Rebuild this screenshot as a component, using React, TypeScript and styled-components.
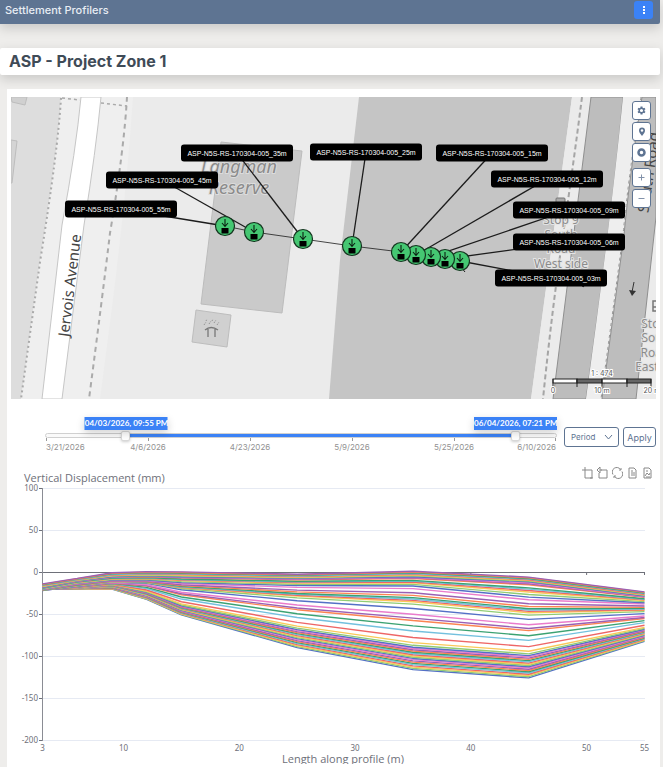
import React, { useState } from 'react';
import styled, { createGlobalStyle } from 'styled-components';

const GlobalStyle = createGlobalStyle`
  *, *::before, *::after { box-sizing: border-box; }
  html, body { margin: 0; padding: 0; }
  body {
    background: #eeedeb;
    font-family: Inter, 'Open Sans', sans-serif;
    color: #5e7492;
  }
  button, select, input { font: inherit; color: inherit; margin: 0; }
  svg { display: block; }
`;

const Page = styled.div`
  display: flex;
  flex-direction: column;
  min-height: 100vh;
  padding-right: 3px;
`;

const TopBar = styled.header`
  display: flex;
  align-items: center;
  justify-content: space-between;
  height: 24px;
  padding: 0 7px 4px 5px;
  background: #5e7492;
  color: #e8edf4;
  font-size: 11px;
  font-weight: 500;
  line-height: 18px;
  border-radius: 0 0 2px 0;
  box-shadow: 0 4px 12px rgba(0, 0, 0, 0.16);
`;

const MenuButton = styled.button`
  display: grid;
  place-items: center;
  width: 19px;
  height: 18px;
  padding: 0;
  border: 0;
  border-radius: 3px;
  background: #3b82f6;
`;

const TitleCard = styled.section`
  margin-top: 24px;
  padding: 0 9px;
  background: #fff;
  border-radius: 2px;
  box-shadow: 0 4px 12px rgba(0, 0, 0, 0.16);
`;

const Title = styled.h1`
  margin: 0;
  color: #3f4b57;
  font-size: 16px;
  font-weight: 700;
  line-height: 27px;
`;

const Card = styled.main`
  flex: 1;
  margin: 14px 0 0 7px;
  padding-top: 8px;
  background: #fff;
`;

const MapFrame = styled.section`
  position: relative;
  margin: 0 4px;
  overflow: hidden;
  background: #ebebeb;
`;

const Drawing = styled.svg`
  width: 100%;
  height: auto;
`;

const Tag = styled.span<{ $x: number; $y: number }>`
  position: absolute;
  left: ${(p) => p.$x}%;
  top: ${(p) => p.$y}%;
  width: 112px;
  border-radius: 3px;
  background: #000;
  color: #fff;
  font-family: 'Liberation Sans', Arial, sans-serif;
  font-size: 7px;
  line-height: 17px;
  text-align: center;
  white-space: nowrap;
  transform: translate(-50%, -50%);
`;

const MapControls = styled.div`
  position: absolute;
  top: 4px;
  right: 5px;
  display: flex;
  flex-direction: column;
  gap: 2px;
`;

const ZoomGroup = styled.div`
  display: flex;
  flex-direction: column;
  gap: 2px;
  margin-top: 4px;
`;

const MapButton = styled.button`
  display: grid;
  place-items: center;
  width: 19px;
  height: 19px;
  padding: 0;
  border: 1px solid #5e7492;
  border-radius: 3px;
  background: #fff;
`;

const RangeRow = styled.section`
  display: flex;
  align-items: flex-start;
  gap: 4px;
  padding: 28px 4px 0 38px;
  font-size: 9px;
`;

const Timeline = styled.div`
  position: relative;
  flex: 1;
  margin-right: 3px;
  padding-top: 6px;
`;

const Rail = styled.div<{ $from: number; $to: number }>`
  height: 5px;
  border: 1px solid #d0d0d0;
  border-radius: 3px;
  background: linear-gradient(
    to right,
    #fafafa ${(p) => p.$from}%,
    #3b82f6 ${(p) => p.$from}%,
    #3b82f6 ${(p) => p.$to}%,
    #fafafa ${(p) => p.$to}%
  );
`;

const Handle = styled.input`
  position: absolute;
  top: 3px;
  left: 0;
  width: 100%;
  height: 11px;
  appearance: none;
  background: transparent;
  pointer-events: none;

  &::-webkit-slider-thumb {
    appearance: none;
    width: 9px;
    height: 10px;
    border: 1px solid #d9d9d9;
    border-radius: 2px;
    background: #fff;
    box-shadow: 0 1px 3px rgba(0, 0, 0, 0.2);
    pointer-events: auto;
  }
`;

const Bubble = styled.output<{ $at: number; $last?: boolean }>`
  position: absolute;
  bottom: 100%;
  left: ${(p) => (p.$last ? 'auto' : `calc(${p.$at}% + 4px)`)};
  right: ${(p) => (p.$last ? '0' : 'auto')};
  width: 83px;
  margin-bottom: -3px;
  background: #3b82f6;
  color: #fff;
  font-family: Lato, sans-serif;
  font-size: 8px;
  font-weight: 700;
  line-height: 13px;
  text-align: center;
  white-space: nowrap;
  box-shadow: 0 3px 8px rgba(0, 0, 0, 0.18);
  transform: ${(p) => (p.$last ? 'none' : 'translateX(-50%)')};
`;

const Scale = styled.div`
  display: flex;
  justify-content: space-between;
  padding: 0 1px;
  color: #929292;
  font-size: 8px;
  line-height: 12px;
`;

const Mark = styled.span`
  display: flex;
  flex-direction: column;
  align-items: center;
  width: 0;
  white-space: nowrap;

  &::before {
    content: '';
    width: 1px;
    height: 3px;
    flex: none;
    background: #999;
  }
  &:first-child { align-items: flex-start; }
  &:last-child { align-items: flex-end; }
`;

const SelectBox = styled.div`
  position: relative;

  svg {
    position: absolute;
    right: 6px;
    top: 7px;
    pointer-events: none;
  }
`;

const Select = styled.select`
  appearance: none;
  width: 55px;
  height: 20px;
  padding: 0 6px;
  border: 1px solid #5e7492;
  border-radius: 3px;
  background: #fff;
  font-size: 8px;
`;

const ApplyButton = styled.button`
  width: 33px;
  height: 20px;
  padding: 0;
  border: 1px solid #5e7492;
  border-radius: 3px;
  background: #fff;
  font-size: 9px;
`;

const ChartPanel = styled.section`
  margin-top: 13px;
  font-family: 'Noto Sans', sans-serif;
`;

const ChartHeader = styled.div`
  display: flex;
  align-items: flex-start;
  justify-content: space-between;
  height: 18px;
  padding: 0 7px 0 17px;
`;

const ChartTitle = styled.h2`
  margin: 0;
  align-self: flex-end;
  color: #6e7079;
  font-family: 'Open Sans', 'Noto Sans', sans-serif;
  font-size: 11px;
  font-weight: 400;
  line-height: 12px;
`;

const Toolbox = styled.div`
  display: flex;
  gap: 4px;
`;

const Tool = styled.button`
  display: grid;
  place-items: center;
  width: 11px;
  height: 14px;
  padding: 0;
  border: 0;
  background: none;
`;

type Point = { name: string; x: number; y: number; lx: number; ly: number };

const MAP = { x: 11, y: 97, w: 645, h: 302 };

const POINTS: Point[] = [
  { name: '03m', x: 460, y: 261, lx: 551, ly: 278 },
  { name: '06m', x: 445, y: 259, lx: 569, ly: 242 },
  { name: '09m', x: 431, y: 257, lx: 569, ly: 210 },
  { name: '12m', x: 416, y: 255, lx: 547, ly: 179 },
  { name: '15m', x: 401, y: 252, lx: 492, ly: 153 },
  { name: '25m', x: 352, y: 246, lx: 366, ly: 152 },
  { name: '35m', x: 303, y: 239, lx: 237, ly: 153 },
  { name: '45m', x: 254, y: 232, lx: 162, ly: 180 },
  { name: '55m', x: 225, y: 226, lx: 121, ly: 209 },
];

const MAP_FONT = "'Noto Sans', sans-serif";

function MapDrawing() {
  const halo = { stroke: '#e4e4e4', strokeWidth: 2, paintOrder: 'stroke' } as const;
  return (
    <Drawing viewBox={`${MAP.x} ${MAP.y} ${MAP.w} ${MAP.h}`} role="img" aria-label="Monitoring points map" fontFamily={MAP_FONT}>
      <rect x="11" y="97" width="645" height="302" fill="#ebebeb" />
      <path d="M11 97H61Q58 150 40 260L21 399H11Z" fill="#dddddd" />
      <path d="M61 97H133Q126 200 111 315L100 399H21L40 260Q58 150 61 97Z" fill="#efefef" />
      <path d="M11 97H27L25 105L12 102Z" fill="#d0d0d0" stroke="#bdbdbd" />
      <path d="M11 140L17 141L12 183H11Z" fill="#d4d4d4" stroke="#bdbdbd" />
      <path d="M81 97H101Q96 150 84 225L62 399H42L62 225Q76 150 81 97Z" fill="#fff" stroke="#c6c6c6" />
      <g fill="none" stroke="#aaa" strokeWidth="2">
        <path d="M61 98Q58 150 40 262L21 399" strokeDasharray="2 3" />
        <path d="M62 98L80 100M101 103L127 106" strokeDasharray="3 3" strokeWidth="1.5" />
        <path d="M127 97Q124 150 110 233Q102 300 89 399" strokeDasharray="5 4" />
      </g>

      <path d="M221 142L302 151L282 313L201 304Z" fill="#cacaca" stroke="#bcbcbc" />
      <path d="M196 310L231 315L227 347L192 342Z" fill="#d0d0d0" stroke="#bdbdbd" />
      <g fill="none" stroke="#777" strokeWidth="1.3">
        <path d="M205 330Q211 325 218 330M208 329V337M215 329V337" />
        <path d="M204 325l2-3M209 324l2-3M214 323l2-3M206 321l1-2M212 321l1-2M217 325l2-3" strokeWidth="0.8" strokeDasharray="1 1" />
      </g>

      <path d="M359 97H572L531 399H329L340 260Z" fill="#c5c5c5" />
      <path d="M572 97H591L553 399H531Z" fill="#ebebeb" />
      <path d="M591 97H623Q614 200 586 399H553Z" fill="#bdbdbd" stroke="#8f8f8f" />
      <path d="M623 97H642Q629 180 624 235L602 399H586Q612 210 623 97Z" fill="#eeeeee" />
      <path d="M642 97H656V217L636 399H602L624 235Q629 180 642 97Z" fill="#bdbdbd" stroke="#8f8f8f" />
      <path d="M582 97Q574 160 563 235Q552 310 543 399" fill="none" stroke="#a5a5a5" strokeWidth="2" strokeDasharray="5 3" />
      <path d="M641 97Q628 180 623 235L601 399" fill="none" stroke="#999" strokeDasharray="3 3" />
      <path d="M634 282L632 292" stroke="#333" />
      <path d="M629 290L636 291L632 296Z" fill="#333" />
      <path d="M584 282L583 287" stroke="#333" strokeWidth="2" />

      <g fontSize="18" fontStyle="italic" fill="#8b8b8b" textAnchor="middle" stroke="#dcdcdc" strokeWidth="2" paintOrder="stroke">
        <text x="239" y="173">Langman</text>
        <text x="239" y="194">Reserve</text>
      </g>
      <g fill="#444" fontSize="15" textAnchor="middle">
        <text transform="translate(75 286) rotate(-83)">Jervois Avenue</text>
        <text transform="translate(654 173) rotate(-82)">South Road</text>
      </g>
      <g fontSize="12" fill="#8c8c8c" textAnchor="middle" {...halo}>
        <text x="561" y="224">Stop 9</text>
        <text x="561" y="239">South</text>
        <text x="561" y="253">Road</text>
        <text x="561" y="268">West side</text>
        <text x="659" y="328">Stop 8</text>
        <text x="658" y="342">South</text>
        <text x="655" y="357">Road</text>
        <text x="660" y="371">East side</text>
      </g>
      <rect x="556" y="198" width="9" height="10" rx="1" fill="#aaa" stroke="#777" />
      <path d="M656 301H653V311H656M653 307H656" fill="none" stroke="#777" strokeWidth="1.5" />

      <g stroke="#222" strokeWidth="1">
        <rect x="553" y="379" width="24" height="4" fill="#fff" />
        <rect x="577" y="379" width="25" height="4" fill="#666" />
        <rect x="602" y="379" width="25" height="4" fill="#fff" />
        <rect x="627" y="379" width="24" height="4" fill="#666" />
        <path d="M553 379V389M577 379V387M602 379V389M627 379V387M651 379V389" />
      </g>
      <g fontFamily="Inter, sans-serif" fontSize="7" fill="#555" textAnchor="middle" stroke="#fff" strokeWidth="2" paintOrder="stroke">
        <text x="602" y="376">1 : 474</text>
        <text x="553" y="393">0</text>
        <text x="602" y="393">10 m</text>
        <text x="652" y="393">20 m</text>
      </g>

      <g stroke="#1c1c1c" fill="none">
        <path d={'M' + POINTS.map((p) => `${p.x} ${p.y}`).join('L')} strokeWidth="0.8" />
        {POINTS.map((p) => (
          <path key={p.name} d={`M${p.x} ${p.y}L${p.lx} ${p.ly}`} strokeWidth="1.3" />
        ))}
        <path d="M460 269Q463 268 465 272" />
      </g>
      {POINTS.map((p) => (
        <g key={p.name} transform={`translate(${p.x} ${p.y})`}>
          <circle r="9.5" fill="#45c772" stroke="#14351f" strokeWidth="1.2" />
          <path d="M0 -7V0M-3 -3L0 0.5L3 -3" fill="none" stroke="#0b1f12" strokeWidth="1.1" />
          <rect x="-3.5" y="2" width="7" height="5.5" fill="#000" />
        </g>
      ))}
    </Drawing>
  );
}

const PALETTE = ['#5470c6', '#91cc75', '#fac858', '#ee6666', '#73c0de', '#3ba272', '#fc8452', '#9a60b4', '#ea7ccc'];

// Surveys at which the displacement of every station is known; the rest are spread between them.
const KEY_SURVEYS = [0, 18, 27, 36, 45, 52];
const SPREADS = [
  null,
  [0, 0.05, 0.12, 0.25, 0.42, 0.55, 0.69, 0.75, 0.85, 1],
  [0, 0.19, 0.3, 0.36, 0.42, 0.48, 0.58, 0.7, 0.88, 1],
  [0, 0.17, 0.33, 0.43, 0.52, 0.6, 0.8, 0.87, 0.93, 1],
  null,
];
const STATIONS: { at: number; mm: number[] }[] = [
  { at: 3, mm: [-19.5, -19, -21.5, -20, -17.5, -13.5] },
  { at: 6, mm: [-19.5, -18, -16.5, -13, -10, -7] },
  { at: 9, mm: [-19.8, -14.5, -11.5, -9, -5, -0.3] },
  { at: 12, mm: [-32, -23.5, -13, -9, -4, 1] },
  { at: 15, mm: [-50.3, -39.6, -20.6, -12, -5, 0.8] },
  { at: 25, mm: [-89.5, -68, -33.6, -15.5, -7, -2] },
  { at: 35, mm: [-115.6, -89, -42.8, -16, -5, 1.5] },
  { at: 45, mm: [-125.5, -99, -55.8, -29.3, -11, -5.5] },
  { at: 55, mm: [-82, -67.5, -49, -36, -28, -23] },
];

const xOf = (metres: number) => 35.5 + ((metres - 3) * 602) / 52;
const yOf = (mm: number) => 88.5 - mm * 0.84;

function valueAt(mm: number[], survey: number) {
  let k = 0;
  while (k < KEY_SURVEYS.length - 2 && survey > KEY_SURVEYS[k + 1]) k += 1;
  const step = survey - KEY_SURVEYS[k];
  const spread = SPREADS[k];
  const f = spread ? spread[step] : step / (KEY_SURVEYS[k + 1] - KEY_SURVEYS[k]);
  return mm[k] + (mm[k + 1] - mm[k]) * f;
}

const PROFILES = Array.from({ length: 53 }, (_, i) => ({
  color: PALETTE[i % PALETTE.length],
  points: STATIONS.map((s) => `${xOf(s.at).toFixed(1)},${yOf(valueAt(s.mm, i)).toFixed(2)}`).join(' '),
}));

function ProfileChart() {
  return (
    <Drawing viewBox="0 0 653 280" role="img" aria-label="Vertical displacement along profile" fill="#6e7079" fontSize="8">
      {[100, 50, 0, -50, -100, -150, -200].map((v) => (
        <g key={v}>
          <path d={`M36 ${yOf(v)}H638`} stroke="#e6eaf3" />
          <path d={`M32 ${yOf(v)}H36`} stroke="#6e7079" />
          <text x="31" y={yOf(v) + 2} textAnchor="end">{v}</text>
        </g>
      ))}
      <path d="M35.5 4V257" stroke="#8a8c94" />
      <path d={`M36 ${yOf(0)}H638`} stroke="#6e7079" />
      {[10, 20, 30, 40, 50, 55].map((v) => (
        <path key={v} d={`M${xOf(v)} 88V91`} stroke="#6e7079" />
      ))}
      <g fill="none" strokeWidth="1.4" strokeLinejoin="bevel">
        {PROFILES.map((p, i) => (
          <polyline key={i} points={p.points} stroke={p.color} />
        ))}
      </g>
      {[3, 10, 20, 30, 40, 50, 55].map((v) => (
        <text key={v} x={xOf(v)} y="267" textAnchor="middle">{v}</text>
      ))}
      <text x="336" y="279" fontSize="11" fontFamily="'Open Sans', 'Noto Sans', sans-serif" textAnchor="middle">
        Length along profile (m)
      </text>
    </Drawing>
  );
}

const TOOLS: { label: string; d: string }[] = [
  { label: 'Zoom', d: 'M0 3H10V11H3V0M8 11H11' },
  { label: 'Zoom reset', d: 'M4 3H10V11H2V6M0 3L3 0V6ZM3 3H5' },
  { label: 'Restore', d: 'M1 7.500A4.500 4.500 0 0 1 8.500 2.500M10 4.500A4.500 4.500 0 0 1 2.500 9.500M9 1V3H7M2 11V9H4' },
  { label: 'Data view', d: 'M2 1H7L9 3V11H2ZM4 4H6M4 6H8M4 8H8' },
  { label: 'Save as image', d: 'M2 1H7L9 3V11H2ZM3 9L5 6L7 8L8 6M4 4H6M4 10H8' },
];

const DATES = ['3/21/2026', '4/6/2026', '4/23/2026', '5/9/2026', '5/25/2026', '6/10/2026'];

const START = { from: 151, to: 927 };

const formatMoment = (value: number) => {
  if (value === START.from) return '04/03/2026, 09:55 PM';
  if (value === START.to) return '06/04/2026, 07:21 PM';
  const t = new Date(2026, 2, 21);
  t.setMinutes(Math.round((value / 1000) * 81 * 1440));
  return t.toLocaleString('en-US', {
    month: '2-digit',
    day: '2-digit',
    year: 'numeric',
    hour: '2-digit',
    minute: '2-digit',
  });
};

export default function App() {
  const [from, setFrom] = useState(START.from);
  const [to, setTo] = useState(START.to);

  return (
    <>
      <GlobalStyle />
      <Page>
        <TopBar>
          <span>Settlement Profilers</span>
          <MenuButton aria-label="Menu">
            <svg width="4" height="10" viewBox="0 0 4 10" fill="#fff">
              <rect x="1" y="1" width="2" height="2" />
              <rect x="1" y="4" width="2" height="2" />
              <rect x="1" y="7" width="2" height="2" />
            </svg>
          </MenuButton>
        </TopBar>
        <TitleCard>
          <Title>ASP - Project Zone 1</Title>
        </TitleCard>
        <Card>
          <MapFrame>
            <MapDrawing />
            {POINTS.map((p) => (
              <Tag key={p.name} $x={((p.lx - MAP.x) / MAP.w) * 100} $y={((p.ly - MAP.y) / MAP.h) * 100}>
                ASP-N5S-RS-170304-005_{p.name}
              </Tag>
            ))}
            <MapControls>
              <MapButton aria-label="Settings">
                <svg width="9" height="9" viewBox="0 0 9 9">
                  <path d="M4.5 0.5V8.5M1 2.5L8 6.5M8 2.5L1 6.5" stroke="#5e7492" strokeWidth="2" />
                  <circle cx="4.5" cy="4.5" r="2.3" fill="#fff" stroke="#5e7492" strokeWidth="1.5" />
                </svg>
              </MapButton>
              <MapButton aria-label="Locate">
                <svg width="8" height="10" viewBox="0 0 8 10">
                  <path d="M4 9C2 6.5 1 5 1 3.5A3 3 0 0 1 7 3.5C7 5 6 6.5 4 9Z" fill="#5e7492" />
                  <circle cx="4" cy="3.5" r="1.2" fill="#fff" />
                </svg>
              </MapButton>
              <MapButton aria-label="Recenter">
                <svg width="9" height="9" viewBox="0 0 9 9">
                  <circle cx="4.5" cy="4.5" r="3" fill="none" stroke="#5e7492" strokeWidth="2.5" />
                </svg>
              </MapButton>
              <ZoomGroup>
                <MapButton aria-label="Zoom in">
                  <svg width="7" height="7" viewBox="0 0 7 7" stroke="#8292aa">
                    <path d="M0.5 3.5H6.5M3.5 0.5V6.5" />
                  </svg>
                </MapButton>
                <MapButton aria-label="Zoom out">
                  <svg width="7" height="7" viewBox="0 0 7 7" stroke="#8292aa">
                    <path d="M0.5 3.5H6.5" />
                  </svg>
                </MapButton>
              </ZoomGroup>
            </MapControls>
          </MapFrame>

          <RangeRow>
            <Timeline>
              <Rail $from={from / 10} $to={to / 10} />
              <Handle
                type="range"
                aria-label="From"
                min={0}
                max={1000}
                value={from}
                onChange={(e) => setFrom(Math.min(Number(e.target.value), to))}
              />
              <Handle
                type="range"
                aria-label="To"
                min={0}
                max={1000}
                value={to}
                onChange={(e) => setTo(Math.max(Number(e.target.value), from))}
              />
              <Bubble $at={from / 10}>{formatMoment(from)}</Bubble>
              <Bubble $at={to / 10} $last>{formatMoment(to)}</Bubble>
              <Scale>
                {DATES.map((d) => (
                  <Mark key={d}>{d}</Mark>
                ))}
              </Scale>
            </Timeline>
            <SelectBox>
              <Select aria-label="Period" defaultValue="period">
                <option value="period">Period</option>
              </Select>
              <svg width="9" height="6" viewBox="0 0 9 6" fill="none" stroke="#5e7492">
                <path d="M1 1L4.5 5L8 1" />
              </svg>
            </SelectBox>
            <ApplyButton>Apply</ApplyButton>
          </RangeRow>

          <ChartPanel>
            <ChartHeader>
              <ChartTitle>Vertical Displacement (mm)</ChartTitle>
              <Toolbox>
                {TOOLS.map((t) => (
                  <Tool key={t.label} aria-label={t.label}>
                    <svg width="11" height="12" viewBox="0 0 11 12" fill="none" stroke="#888">
                      <path d={t.d} />
                    </svg>
                  </Tool>
                ))}
              </Toolbox>
            </ChartHeader>
            <ProfileChart />
          </ChartPanel>
        </Card>
      </Page>
    </>
  );
}
